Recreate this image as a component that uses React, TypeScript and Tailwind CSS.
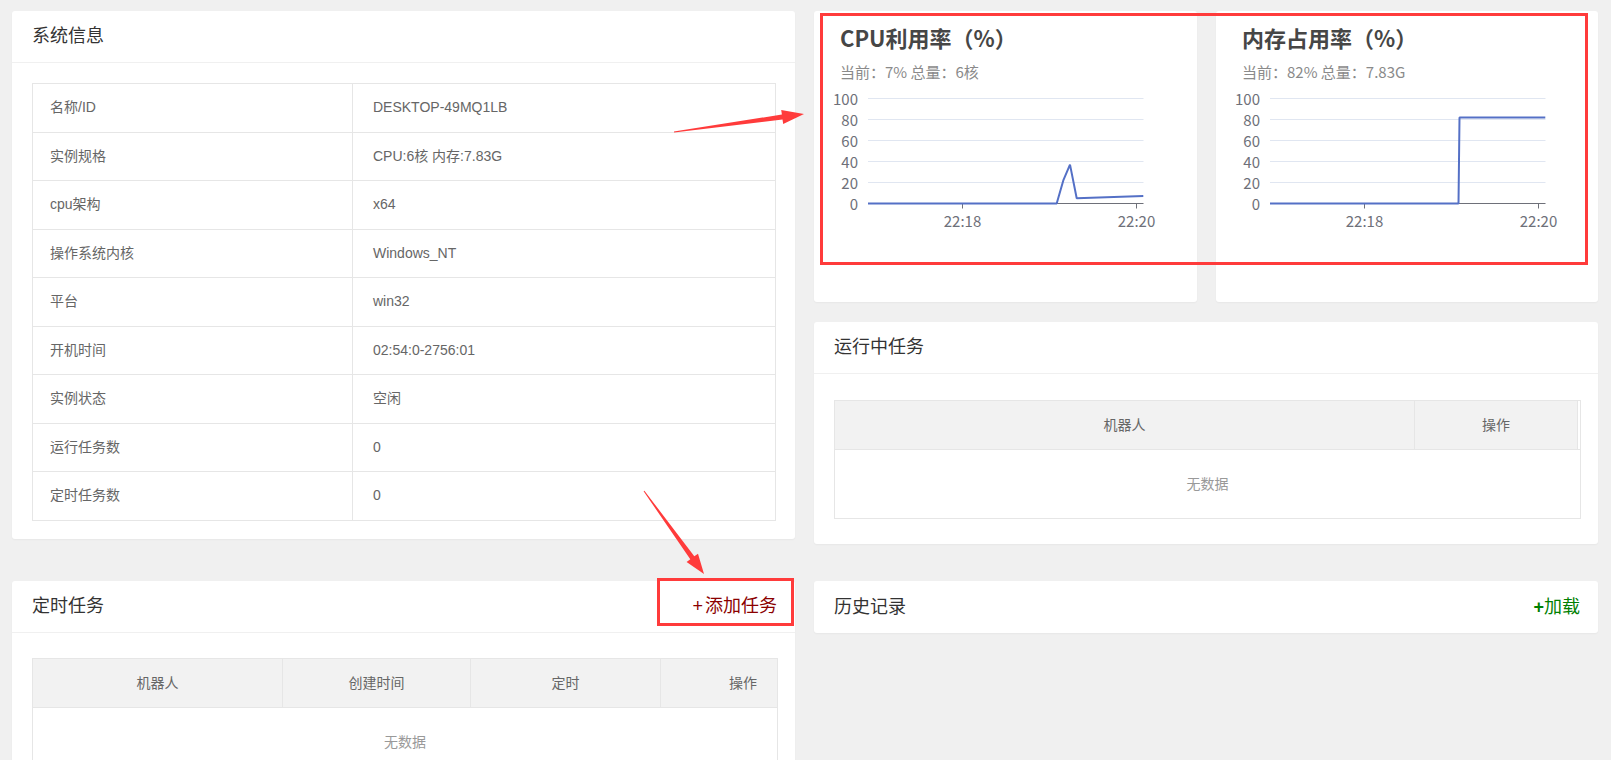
import React from "react";

const sysRows = [
  ["名称/ID", "DESKTOP-49MQ1LB"],
  ["实例规格", "CPU:6核 内存:7.83G"],
  ["cpu架构", "x64"],
  ["操作系统内核", "Windows_NT"],
  ["平台", "win32"],
  ["开机时间", "02:54:0-2756:01"],
  ["实例状态", "空闲"],
  ["运行任务数", "0"],
  ["定时任务数", "0"],
];

function CardHeader({ title, action, border = true }: { title: string; action?: React.ReactNode; border?: boolean }) {
  return (
    <div className={`h-[52px] flex items-center justify-between pl-5 pr-[18px] ${border ? "border-b border-[#f0f0f0]" : ""}`}>
      <span className="text-[18px] text-[#333]">{title}</span>
      {action}
    </div>
  );
}

function UsageChart({ title, sub, points }: { title: string; sub: string; points: string }) {
  const ticks = [100, 80, 60, 40, 20, 0];
  return (
    <div className="bg-white rounded-[3px] h-[291px] overflow-hidden shadow-[0_1px_2px_rgba(0,0,0,0.04)]">
      <div className="pl-[26px] pt-3 font-['Noto_Sans_CJK_SC',sans-serif]">
        <div className="text-[22px] leading-[28px] font-bold text-[#464646]">{title}</div>
        <div className="mt-[11px] text-[15px] leading-5 text-[#8a8a8a]">{sub}</div>
      </div>
      <svg width={383} height={160} className="block mt-[3px]" fontFamily="'Noto Sans CJK SC', sans-serif" fontSize={15}>
        {ticks.map((v, i) => {
          const y = 13.5 + i * 21;
          return (
            <g key={v}>
              {v !== 0 && <line x1={54} x2={329.5} y1={y} y2={y} stroke="#e0e6f1" />}
              <text x={44} y={y} textAnchor="end" dominantBaseline="central" fill="#6e7079">{v}</text>
            </g>
          );
        })}
        <line x1={54} x2={329.5} y1={118.5} y2={118.5} stroke="#6e7079" />
        <line x1={148.5} x2={148.5} y1={118.5} y2={123.5} stroke="#6e7079" />
        <line x1={322.5} x2={322.5} y1={118.5} y2={123.5} stroke="#6e7079" />
        <text x={148.5} y={135} textAnchor="middle" dominantBaseline="central" fill="#6e7079">22:18</text>
        <text x={322.5} y={135} textAnchor="middle" dominantBaseline="central" fill="#6e7079">22:20</text>
        <polyline points={points} fill="none" stroke="#5470c6" strokeWidth={2} strokeLinejoin="bevel" />
      </svg>
    </div>
  );
}

function EmptyTable({ cols, gutter }: { cols: { name: string; cls: string }[]; gutter?: boolean }) {
  return (
    <div className="border border-[#e6e6e6]">
      <div className="flex h-[49px] border-b border-[#e6e6e6]">
        <div className="flex flex-1 bg-[#f2f2f2]">
          {cols.map((c, i) => (
            <div key={i} className={`flex items-center text-[14px] text-[#666] ${c.cls}`}>{c.name}</div>
          ))}
        </div>
        {gutter && <div className="w-[2px] bg-white" />}
      </div>
      <div className="h-[68px] flex items-center justify-center text-[14px] text-[#999]">无数据</div>
    </div>
  );
}

export default function App() {
  return (
    <div className="relative h-[760px] overflow-hidden bg-[#f0f0f0] font-['Liberation_Sans','Noto_Sans_CJK_SC',sans-serif]">
      <div className="pl-3 pt-[11px]">
        <div className="grid grid-cols-[783px_784px] gap-x-[19px]">
          <div className="bg-white rounded-[3px] shadow-[0_1px_2px_rgba(0,0,0,0.04)] h-[528px]">
            <CardHeader title="系统信息" />
            <div className="pt-5 pl-5 pr-[19px]">
              <div className="border-t border-l border-r border-[#e6e6e6]">
                {sysRows.map(([k, v]) => (
                  <div key={k} className="flex h-[48.5px] border-b border-[#e6e6e6] text-[14px] text-[#666]">
                    <div className="w-[320px] border-r border-[#e6e6e6] flex items-center pl-[17px]">{k}</div>
                    <div className="flex-1 flex items-center pl-5">{v}</div>
                  </div>
                ))}
              </div>
            </div>
          </div>

          <div className="flex flex-col">
            <div className="grid grid-cols-[383px_382px] gap-x-[19px]">
              <UsageChart
                title="CPU利用率（%）"
                sub="当前：7% 总量：6核"
                points="54,118.5 242.7,118.5 249.3,95.4 256,79.6 262.7,113.3 329.3,111.1"
              />
              <UsageChart
                title="内存占用率（%）"
                sub="当前：82% 总量：7.83G"
                points="54,118.5 242.5,118.5 243.5,32.4 329.3,32.4"
              />
            </div>
            <div className="mt-5 bg-white rounded-[3px] shadow-[0_1px_2px_rgba(0,0,0,0.04)]">
              <CardHeader title="运行中任务" />
              <div className="pt-[26px] pb-[25px] pl-5 pr-[17px]">
                <EmptyTable
                  gutter
                  cols={[
                    { name: "机器人", cls: "w-[580px] justify-center border-r border-[#e6e6e6]" },
                    { name: "操作", cls: "flex-1 justify-center border-r border-[#e6e6e6]" },
                  ]}
                />
              </div>
            </div>
          </div>
        </div>

        <div className="grid grid-cols-[783px_784px] gap-x-[19px] mt-[37px] items-start">
          <div className="bg-white rounded-[3px] shadow-[0_1px_2px_rgba(0,0,0,0.04)]">
            <CardHeader
              title="定时任务"
              action={
                <span className="text-[18px] text-[#8b0000]">
                  <span className="mr-[2px]">+</span>添加任务
                </span>
              }
            />
            <div className="pt-[25px] pl-5 pr-[17px]">
              <EmptyTable
                cols={[
                  { name: "机器人", cls: "w-[250px] justify-center border-r border-[#e6e6e6]" },
                  { name: "创建时间", cls: "w-[188px] justify-center border-r border-[#e6e6e6]" },
                  { name: "定时", cls: "w-[190px] justify-center border-r border-[#e6e6e6]" },
                  { name: "操作", cls: "flex-1 justify-end pr-5" },
                ]}
              />
            </div>
          </div>
          <div className="bg-white rounded-[3px] shadow-[0_1px_2px_rgba(0,0,0,0.04)]">
            <CardHeader
              border={false}
              title="历史记录"
              action={
                <span className="text-[18px] text-[#008000]">
                  <span className="font-bold">+</span>加载
                </span>
              }
            />
          </div>
        </div>
      </div>

      {/* annotation overlays */}
      <div className="absolute left-[820px] top-[13px] w-[768px] h-[252px] border-[3px] border-[#ff3b3b] pointer-events-none" />
      <div className="absolute left-[657px] top-[578px] w-[137px] h-[48px] border-[3px] border-[#ff3b3b] pointer-events-none" />
      <svg className="absolute inset-0 pointer-events-none" width={1611} height={760}>
        <polygon
          fill="#ff3b3b"
          points="673.9,131.5 781.9,114.5 781.2,110.1 804,114 783.2,123.9 782.5,119.5 674.1,132.5"
        />
        <polygon
          fill="#ff3b3b"
          points="643.6,491.3 690.3,559.3 686.6,561.9 704,574 698,553.7 694.3,556.3 644.4,490.7"
        />
      </svg>
    </div>
  );
}
